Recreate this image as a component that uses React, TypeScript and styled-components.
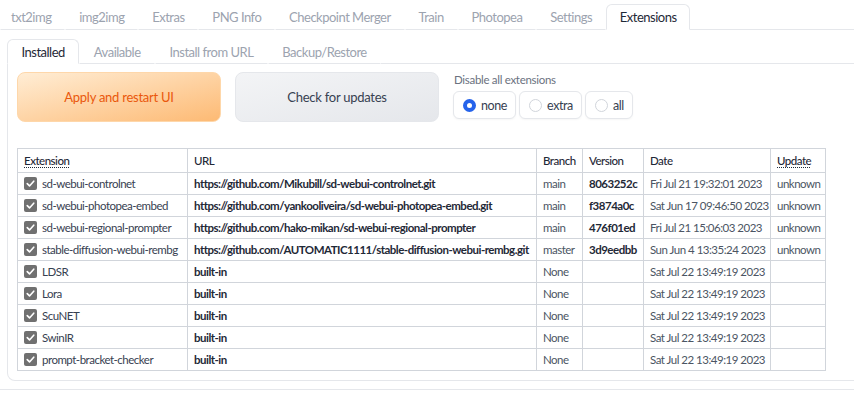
import styled, { createGlobalStyle } from "styled-components";

const GlobalStyle = createGlobalStyle`
    html, body {
        margin: 0;
        padding: 0;
        background: #ffffff;
        font-family: "Lato", "Open Sans", sans-serif;
        overflow: hidden;
    }
`;

const topTabs = ["txt2img", "img2img", "Extras", "PNG Info", "Checkpoint Merger", "Train", "Photopea", "Settings", "Extensions"];
const subTabs = ["Installed", "Available", "Install from URL", "Backup/Restore"];

interface ExtRow {
    name: string;
    url: string;
    branch: string;
    version: string;
    date: string;
    update: string;
}

const rows: ExtRow[] = [
    { name: "sd-webui-controlnet", url: "https://github.com/Mikubill/sd-webui-controlnet.git", branch: "main", version: "8063252c", date: "Fri Jul 21 19:32:01 2023", update: "unknown" },
    { name: "sd-webui-photopea-embed", url: "https://github.com/yankooliveira/sd-webui-photopea-embed.git", branch: "main", version: "f3874a0c", date: "Sat Jun 17 09:46:50 2023", update: "unknown" },
    { name: "sd-webui-regional-prompter", url: "https://github.com/hako-mikan/sd-webui-regional-prompter", branch: "main", version: "476f01ed", date: "Fri Jul 21 15:06:03 2023", update: "unknown" },
    { name: "stable-diffusion-webui-rembg", url: "https://github.com/AUTOMATIC1111/stable-diffusion-webui-rembg.git", branch: "master", version: "3d9eedbb", date: "Sun Jun 4 13:35:24 2023", update: "unknown" },
    { name: "LDSR", url: "built-in", branch: "None", version: "", date: "Sat Jul 22 13:49:19 2023", update: "" },
    { name: "Lora", url: "built-in", branch: "None", version: "", date: "Sat Jul 22 13:49:19 2023", update: "" },
    { name: "ScuNET", url: "built-in", branch: "None", version: "", date: "Sat Jul 22 13:49:19 2023", update: "" },
    { name: "SwinIR", url: "built-in", branch: "None", version: "", date: "Sat Jul 22 13:49:19 2023", update: "" },
    { name: "prompt-bracket-checker", url: "built-in", branch: "None", version: "", date: "Sat Jul 22 13:49:19 2023", update: "" },
];

const radios = ["none", "extra", "all"];

function CheckIcon() {
    return (
        <svg width="13" height="13" viewBox="0 0 16 16">
            <path d="M4 8.2 L6.8 11 L12 5.2" fill="none" stroke="#ffffff" strokeWidth="2" strokeLinecap="round" strokeLinejoin="round" />
        </svg>
    );
}

function App() {
    return (
        <Page>
            <GlobalStyle />
            <TopBar>
                {topTabs.map(t => (
                    <TopTab key={t} $active={t === "Extensions"}>{t}</TopTab>
                ))}
                <Filler />
            </TopBar>

            <Outer>
                <SubBar>
                    {subTabs.map(t => (
                        <SubTab key={t} $active={t === "Installed"}>{t}</SubTab>
                    ))}
                    <Filler />
                </SubBar>

                <Panel>
                    <Controls>
                        <BigButton $primary>Apply and restart UI</BigButton>
                        <BigButton>Check for updates</BigButton>
                        <RadioBlock>
                            <RadioLabel>Disable all extensions</RadioLabel>
                            <RadioRow>
                                {radios.map(r => (
                                    <RadioItem key={r}>
                                        <RadioDot $checked={r === "none"} />
                                        {r}
                                    </RadioItem>
                                ))}
                            </RadioRow>
                        </RadioBlock>
                    </Controls>

                    <Table>
                        <colgroup>
                            <col style={{ width: 170 }} />
                            <col style={{ width: 349 }} />
                            <col style={{ width: 46 }} />
                            <col style={{ width: 61 }} />
                            <col style={{ width: 127 }} />
                            <col style={{ width: 55 }} />
                        </colgroup>
                        <thead>
                            <tr>
                                <Th><Dotted>Extension</Dotted></Th>
                                <Th>URL</Th>
                                <Th>Branch</Th>
                                <Th>Version</Th>
                                <Th>Date</Th>
                                <Th><Dotted>Update</Dotted></Th>
                            </tr>
                        </thead>
                        <tbody>
                            {rows.map(r => (
                                <tr key={r.name}>
                                    <Td>
                                        <NameCell>
                                            <CheckBox><CheckIcon /></CheckBox>
                                            {r.name}
                                        </NameCell>
                                    </Td>
                                    <Td $bold>{r.url}</Td>
                                    <Td>{r.branch}</Td>
                                    <Td $bold>{r.version}</Td>
                                    <Td>{r.date}</Td>
                                    <Td>{r.update}</Td>
                                </tr>
                            ))}
                        </tbody>
                    </Table>
                </Panel>
            </Outer>
        </Page>
    );
}

export default App;

const Page = styled.div`
    width: 854px;
    height: 395px;
    overflow: hidden;
`;

const TopBar = styled.div`
    display: flex;
    align-items: flex-end;
    height: 30px;
`;

const Filler = styled.div`
    flex: 1;
    align-self: stretch;
    border-bottom: 1px solid #e5e7eb;
`;

const TopTab = styled.div<{ $active?: boolean }>`
    height: 26px;
    box-sizing: border-box;
    padding: 0 12.9px;
    display: flex;
    align-items: center;
    font-size: 13px;
    letter-spacing: -0.5px;
    color: ${p => (p.$active ? "#1f2937" : "#9ca3af")};
    border: 1px solid ${p => (p.$active ? "#e5e7eb" : "transparent")};
    border-bottom: 1px solid ${p => (p.$active ? "transparent" : "#e5e7eb")};
    border-radius: 6px 6px 0 0;
    background: #ffffff;
    white-space: nowrap;

    &:first-child {
        padding-left: 10px;
    }
`;

const Outer = styled.div`
    border-bottom: 1px solid #e5e7eb;
    padding-bottom: 8px;
`;

const SubBar = styled.div`
    display: flex;
    align-items: flex-end;
    height: 34px;
    padding-left: 7px;
`;

const SubTab = styled.div<{ $active?: boolean }>`
    height: 25px;
    box-sizing: border-box;
    padding: 0 13.5px;
    display: flex;
    align-items: center;
    font-size: 13px;
    letter-spacing: -0.5px;
    color: ${p => (p.$active ? "#1f2937" : "#9ca3af")};
    border: 1px solid ${p => (p.$active ? "#e5e7eb" : "transparent")};
    border-bottom: 1px solid ${p => (p.$active ? "transparent" : "#e5e7eb")};
    border-radius: 6px 6px 0 0;
    white-space: nowrap;
`;

const Panel = styled.div`
    margin-left: 7px;
    width: 870px;
    height: 317px;
    box-sizing: border-box;
    border: 1px solid #e5e7eb;
    border-top: none;
    border-radius: 0 0 8px 8px;
    padding: 8px 9px 0;
`;

const Controls = styled.div`
    display: flex;
    align-items: flex-start;
    gap: 14px;
    height: 76px;
`;

const BigButton = styled.div<{ $primary?: boolean }>`
    width: 204px;
    height: 50px;
    box-sizing: border-box;
    display: flex;
    align-items: center;
    justify-content: center;
    border-radius: 8px;
    font-size: 13px;
    letter-spacing: -0.25px;
    border: 1px solid ${p => (p.$primary ? "#fed7aa" : "#e5e7eb")};
    color: ${p => (p.$primary ? "#ea580c" : "#374151")};
    background: ${p => (p.$primary
        ? "linear-gradient(to bottom right, #ffedd5, #fdba74)"
        : "linear-gradient(to bottom right, #f3f4f6, #e5e7eb)")};
`;

const RadioBlock = styled.div`
    display: flex;
    flex-direction: column;
    gap: 5px;
    padding-top: 1px;
`;

const RadioLabel = styled.div`
    font-size: 11.5px;
    letter-spacing: -0.3px;
    color: #6b7280;
    padding-left: 1px;
`;

const RadioRow = styled.div`
    display: flex;
    gap: 3px;
`;

const RadioItem = styled.div`
    height: 28px;
    box-sizing: border-box;
    display: flex;
    align-items: center;
    gap: 5px;
    padding: 0 8px 0 9px;
    border: 1px solid #e5e7eb;
    border-radius: 6px;
    font-size: 12.5px;
    letter-spacing: -0.4px;
    color: #374151;
    background: #ffffff;
    box-shadow: 0 1px 2px rgba(0, 0, 0, 0.04);
`;

const RadioDot = styled.span<{ $checked?: boolean }>`
    width: 13px;
    height: 13px;
    box-sizing: border-box;
    border-radius: 50%;
    border: ${p => (p.$checked ? "4px solid #2563eb" : "1px solid #d1d5db")};
    background: #ffffff;
`;

const Table = styled.table`
    border-collapse: collapse;
    table-layout: fixed;
    width: 809px;
    font-size: 11.5px;
    letter-spacing: -0.5px;
    color: #374151;
`;

const Th = styled.th`
    height: 23px;
    border: 1px solid #d1d5db;
    padding: 0 6px;
    text-align: left;
    font-weight: 500;
    color: #1f2937;
    white-space: nowrap;
`;

const Dotted = styled.span`
    text-decoration: underline dotted;
    text-underline-offset: 2px;
`;

const Td = styled.td<{ $bold?: boolean }>`
    height: 21px;
    border: 1px solid #d1d5db;
    padding: 0 6px;
    white-space: nowrap;
    overflow: hidden;
    font-weight: ${p => (p.$bold ? 700 : 400)};
    color: ${p => (p.$bold ? "#1f2937" : "#4b5563")};
`;

const NameCell = styled.div`
    display: flex;
    align-items: center;
    gap: 5px;
    color: #374151;
`;

const CheckBox = styled.span`
    width: 13px;
    height: 13px;
    flex-shrink: 0;
    border-radius: 2px;
    background: #707070;
    display: flex;
    align-items: center;
    justify-content: center;
`;
